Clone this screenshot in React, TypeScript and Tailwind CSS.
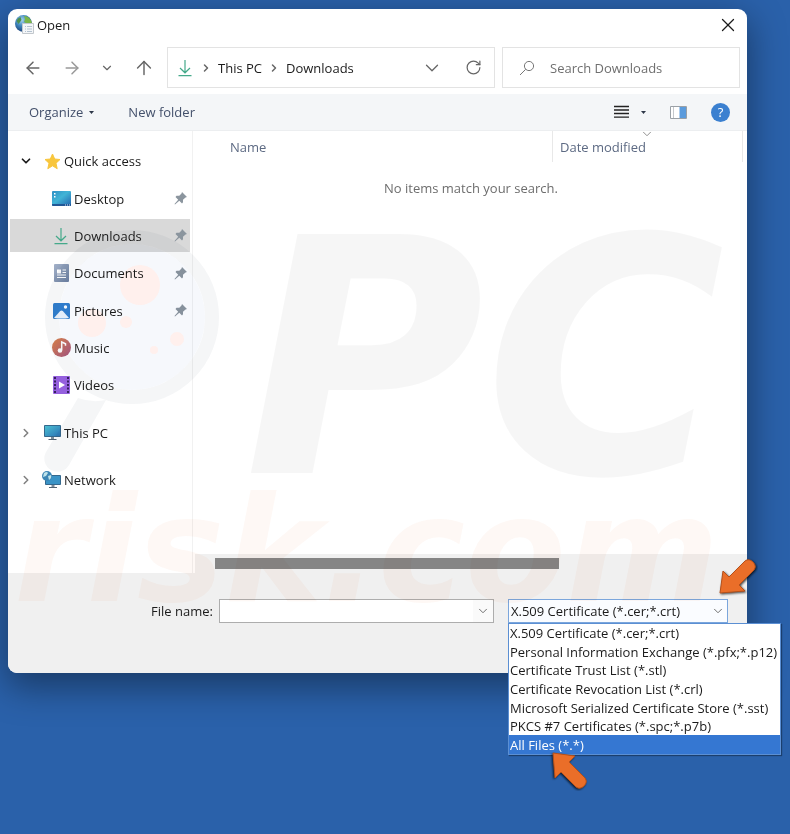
import type { ReactNode } from "react";
import {
  ArrowLeft,
  ArrowRight,
  ArrowUp,
  ChevronDown,
  ChevronRight,
  RotateCw,
  X,
} from "lucide-react";

const FILE_TYPES = [
  "X.509 Certificate (*.cer;*.crt)",
  "Personal Information Exchange (*.pfx;*.p12)",
  "Certificate Trust List (*.stl)",
  "Certificate Revocation List (*.crl)",
  "Microsoft Serialized Certificate Store (*.sst)",
  "PKCS #7 Certificates (*.spc;*.p7b)",
  "All Files (*.*)",
];

const FOLDERS = [
  { name: "Desktop", icon: <DesktopIcon />, pinned: true },
  { name: "Downloads", icon: <DownloadIcon />, pinned: true, active: true },
  { name: "Documents", icon: <DocumentIcon />, pinned: true },
  { name: "Pictures", icon: <PictureIcon />, pinned: true },
  { name: "Music", icon: <MusicIcon />, pinned: false },
  { name: "Videos", icon: <VideoIcon />, pinned: false },
];

export default function App() {
  return (
    <div className="relative min-h-screen overflow-hidden bg-[#2a61aa] pt-[9px] pr-[43px] pb-40 pl-2 font-['Open_Sans','Noto_Sans',sans-serif] text-[13px] leading-5 text-[#1b1b1b]">
      <main className="rounded-[9px] bg-white shadow-[0_12px_36px_2px_rgba(0,0,0,0.4)]">
        <TitleBar />
        <AddressRow />
        <Toolbar />
        <div className="flex">
          <Sidebar />
          <FileList />
        </div>
        <Footer />
      </main>
      <Watermark />
    </div>
  );
}

/* -------------------- Title bar -------------------- */

function TitleBar() {
  return (
    <header className="flex h-8 items-center justify-between pr-2 pl-[7px]">
      <div className="flex items-center gap-[3px]">
        <CertIcon />
        <h1>Open</h1>
      </div>
      <button type="button" aria-label="Close">
        <X size={22} strokeWidth={1.4} />
      </button>
    </header>
  );
}

/* -------------------- Address row -------------------- */

function AddressRow() {
  return (
    <div className="flex items-center px-[7px] py-1.5">
      <nav className="flex w-[152px] shrink-0 items-center justify-between pr-3 pl-2 text-[#666]">
        <button type="button" aria-label="Back">
          <ArrowLeft size={20} strokeWidth={1.8} />
        </button>
        <button type="button" aria-label="Forward" className="text-[#999]">
          <ArrowRight size={20} strokeWidth={1.8} />
        </button>
        <button type="button" aria-label="Recent locations">
          <ChevronDown size={14} strokeWidth={2} />
        </button>
        <button type="button" aria-label="Up">
          <ArrowUp size={22} strokeWidth={1.6} />
        </button>
      </nav>
      <div className="flex h-[41px] min-w-0 flex-1 items-center border border-[#e3e3e3] pr-3 pl-2">
        <DownloadIcon />
        <ChevronRight size={12} strokeWidth={3} className="mx-1.5 text-[#666]" />
        <a href="#this-pc">This PC</a>
        <ChevronRight size={12} strokeWidth={3} className="mx-1.5 text-[#666]" />
        <a href="#downloads">Downloads</a>
        <button
          type="button"
          aria-label="Previous locations"
          className="ml-auto text-[#666]"
        >
          <ChevronDown size={22} strokeWidth={1.4} />
        </button>
        <button
          type="button"
          aria-label="Refresh"
          className="ml-[22px] text-[#666]"
        >
          <RotateCw size={17} strokeWidth={1.7} />
        </button>
      </div>
      <label className="ml-[7px] flex h-[41px] w-[238px] shrink-0 items-center border border-[#e3e3e3] pl-4">
        <SearchIcon />
        <input
          type="search"
          aria-label="Search Downloads"
          placeholder="Search Downloads"
          className="ml-[15px] min-w-0 flex-1 outline-none placeholder:text-[#6f6f6f]"
        />
      </label>
    </div>
  );
}

/* -------------------- Toolbar -------------------- */

function Toolbar() {
  return (
    <div className="flex h-[37px] items-center border-b border-[#eceef0] bg-[#f4f6f8] pr-[17px] pl-[21px] text-[#43506b]">
      <button type="button" className="flex items-center gap-1.5">
        Organize
        <Caret />
      </button>
      <button type="button" className="ml-[34px]">
        New folder
      </button>
      <div className="ml-auto flex items-center">
        <button type="button" aria-label="Change view">
          <svg width="15" height="14" viewBox="0 0 15 14">
            <path
              d="M0 1.5h15M0 5h15M0 8.5h15M0 12.2h15"
              stroke="#222"
              strokeWidth="1.3"
            />
          </svg>
        </button>
        <button type="button" aria-label="More view options" className="ml-3">
          <Caret />
        </button>
        <button type="button" aria-label="Preview pane" className="ml-6">
          <svg width="17" height="13" viewBox="0 0 17 13">
            <path d="M.5.5h16v12H.5z" fill="#fff" stroke="#9aa0a6" />
            <path d="M3.5 1v11" stroke="#c4c8cc" />
            <path d="M9.5 1h6.5v11H9.5z" fill="#5b9bdc" />
          </svg>
        </button>
        <button
          type="button"
          aria-label="Help"
          className="ml-6 grid size-[19px] place-items-center rounded-full bg-[#3b80d0] leading-none text-white"
        >
          ?
        </button>
      </div>
    </div>
  );
}

function Caret() {
  return (
    <svg width="5" height="3" viewBox="0 0 5 3">
      <path d="M0 0h5L2.5 3z" fill="#2d3748" />
    </svg>
  );
}

/* -------------------- Sidebar -------------------- */

function Sidebar() {
  return (
    <aside className="w-[185px] shrink-0 border-r border-[#f1f1f1] pt-[11px] pb-[70px]">
      <div className="flex h-[38px] items-center pl-[11px]">
        <button type="button" aria-label="Collapse Quick access">
          <ChevronDown size={14} strokeWidth={3} />
        </button>
        <span className="ml-[11px] flex items-center gap-[3px]">
          <StarIcon />
          <a href="#quick-access">Quick access</a>
        </span>
      </div>
      <ul className="flex h-56 flex-col">
        {FOLDERS.map((f) => (
          <li key={f.name} className="flex flex-1 items-center px-0.5">
            <a
              href={`#${f.name.toLowerCase()}`}
              className={`flex h-[33px] flex-1 items-center pl-[41px] ${
                f.active ? "bg-[#d9d9d9]" : ""
              }`}
            >
              <span className="mr-[3px] grid w-5 place-items-center">
                {f.icon}
              </span>
              {f.name}
              {f.pinned && <PinIcon />}
            </a>
          </li>
        ))}
      </ul>
      <div className="pt-[5px]">
        <TreeRoot name="This PC" icon={<MonitorIcon />} />
        <TreeRoot name="Network" icon={<NetworkIcon />} />
      </div>
    </aside>
  );
}

function TreeRoot({ name, icon }: { name: string; icon: ReactNode }) {
  return (
    <div className="flex h-[47px] items-center pl-[11px]">
      <button type="button" aria-label={`Expand ${name}`}>
        <ChevronRight size={14} strokeWidth={2.6} className="text-[#808080]" />
      </button>
      <span className="ml-[11px] flex items-center gap-[3px]">
        {icon}
        <a href={`#${name.toLowerCase().replace(" ", "-")}`}>{name}</a>
      </span>
    </div>
  );
}

/* -------------------- File list -------------------- */

function FileList() {
  return (
    <section className="flex min-w-0 flex-1 flex-col pl-0.5">
      <div className="flex h-[31px] text-[#5d6a83]">
        <button type="button" className="flex-1 pl-[35px] text-left">
          Name
        </button>
        <button
          type="button"
          className="relative mr-1 w-[191px] border-x border-[#e8e8e8] pl-[7px] text-left"
        >
          Date modified
          <ChevronDown
            size={14}
            strokeWidth={1.6}
            className="absolute -top-1 left-[87px] text-[#888]"
          />
        </button>
      </div>
      <p className="pt-4 text-center text-[#6d6d6d]">
        No items match your search.
      </p>
      <div className="mt-auto h-[19px] bg-[#f0f0f0] pt-1 pr-[188px] pl-5">
        <div className="h-[11px] bg-[#858585]" />
      </div>
    </section>
  );
}

/* -------------------- Footer -------------------- */

function Footer() {
  return (
    <footer className="flex rounded-b-[9px] bg-[#f0f0f0] pt-[26px] pr-[19px] pb-[50px]">
      <div className="flex flex-1 items-center">
        <label htmlFor="file-name" className="w-[205px] text-right">
          File name:
        </label>
        <div className="ml-1.5 flex h-6 min-w-0 flex-1 items-center border border-[#adadad] bg-white">
          <input
            id="file-name"
            type="text"
            className="min-w-0 flex-1 px-1 outline-none"
          />
          <button
            type="button"
            aria-label="File name history"
            className="grid h-full w-5 place-items-center bg-[#fafafa] text-[#666]"
          >
            <ChevronDown size={14} strokeWidth={1.6} />
          </button>
        </div>
      </div>
      <div className="relative ml-3.5 w-[220px] shrink-0">
        <select
          aria-label="File type"
          className="block h-6 w-full appearance-none border border-[#7ba6dc] bg-[#fafcff] pr-5 pl-0.5 outline-none"
        >
          {FILE_TYPES.map((t) => (
            <option key={t}>{t}</option>
          ))}
        </select>
        <ChevronDown
          size={14}
          strokeWidth={1.6}
          className="pointer-events-none absolute top-[5px] right-[3px] text-[#666]"
        />
        <ul
          role="listbox"
          aria-label="File type options"
          className="absolute top-6 left-0 z-10 flex h-[132px] w-[273px] flex-col border border-[#5b8fd3] bg-white whitespace-nowrap shadow-[1px_1px_1px_rgba(0,0,0,0.35)]"
        >
          {FILE_TYPES.map((t) => {
            const selected = t === "All Files (*.*)";
            return (
              <li
                key={t}
                role="option"
                aria-selected={selected}
                className={`flex min-h-0 flex-1 items-center pl-px ${
                  selected ? "bg-[#3577d2] text-white" : ""
                }`}
              >
                {t}
              </li>
            );
          })}
        </ul>
        <PointerArrow className="absolute -top-[43px] -right-[30px] z-20" />
        <PointerArrow className="absolute top-[150px] left-10 z-20 rotate-90" />
      </div>
    </footer>
  );
}

/* -------------------- Watermark -------------------- */

function Watermark() {
  return (
    <svg
      className="pointer-events-none absolute top-0 left-0 mix-blend-multiply"
      width="790"
      height="640"
      viewBox="0 0 790 640"
      aria-hidden
    >
      <g fontFamily="DejaVu Sans" fontWeight="bold" fontStyle="italic">
        <text x="244" y="473" fontSize="328" fill="#000" fillOpacity="0.035">
          PC
        </text>
        <text x="14" y="601" fontSize="147" fill="#f06020" fillOpacity="0.045">
          risk.com
        </text>
      </g>
      <circle
        cx="132"
        cy="317"
        r="80"
        fill="none"
        stroke="#203050"
        strokeOpacity="0.045"
        strokeWidth="14"
      />
      <path
        d="M78 398 46 452a13 13 0 0 0 23 13l37-65q-14 3-28-2z"
        fill="#203050"
        fillOpacity="0.045"
      />
      <circle cx="132" cy="317" r="73" fill="#3060b0" fillOpacity="0.045" />
      <g fill="#fff0ed">
        <circle cx="140" cy="285" r="20" />
        <circle cx="92" cy="323" r="14" />
        <circle cx="126" cy="322" r="6" />
        <circle cx="177" cy="339" r="7" />
        <circle cx="154" cy="350" r="4" />
      </g>
    </svg>
  );
}

/* -------------------- Icons -------------------- */

function PointerArrow({ className }: { className: string }) {
  return (
    <svg width="42" height="42" viewBox="0 0 42 42" className={className}>
      <path
        d="M4 37 7 15l6 6L29 5q4-3 8 1t1 8L23 29l6 6z"
        fill="#ea6e29"
        stroke="#b5501a"
        strokeLinejoin="round"
        className="drop-shadow-[1px_1px_1px_rgba(0,0,0,0.7)]"
      />
    </svg>
  );
}

function CertIcon() {
  return (
    <svg width="19" height="20" viewBox="0 0 19 20">
      <defs>
        <radialGradient id="globe" cx=".4" cy=".3" r=".7">
          <stop offset="0" stopColor="#a5d4ee" />
          <stop offset=".5" stopColor="#3f86bd" />
          <stop offset="1" stopColor="#1d437c" />
        </radialGradient>
      </defs>
      <circle cx="8.500" cy="8.500" r="8.500" fill="url(#globe)" />
      <path d="M9 1q6 0 8 7l-4 1-4-2 1-3z" fill="#7ab648" />
      <path d="M1.500 6q1-3 4-4l1 3-3 4z" fill="#4e8f4c" />
      <path d="M7.500 8.500h11v10h-11z" fill="#f4f6f8" stroke="#c3c8cd" />
      <path d="M10 11.500h1m1 0h5m-7 2.500h1m1 0h5m-7 2.500h1m1 0h5" stroke="#b4c2d0" />
    </svg>
  );
}

function SearchIcon() {
  return (
    <svg width="16" height="16" viewBox="0 0 16 16" fill="none" stroke="#777">
      <circle cx="10" cy="6" r="4.600" />
      <path d="M6.700 9.300 1 15" />
    </svg>
  );
}

function DownloadIcon() {
  return (
    <svg width="18" height="18" viewBox="0 0 18 18" fill="none" stroke="#45a98a" strokeWidth="1.2">
      <path d="M9 1v12.500M4 9l5 4.800L14 9M2.500 16.600h13" />
    </svg>
  );
}

function StarIcon() {
  return (
    <svg width="17" height="17" viewBox="0 0 17 17">
      <path
        d="m8.500 1 2.200 5 5.300.5-4 3.700 1.200 5.500-4.700-2.900-4.700 2.900L5 10.200 1 6.500 6.300 6z"
        fill="#f8c63d"
        stroke="#f8c63d"
        strokeLinejoin="round"
      />
    </svg>
  );
}

function DesktopIcon() {
  return (
    <svg width="19" height="15" viewBox="0 0 19 15">
      <defs>
        <linearGradient id="desk" x1="0" y1="0" x2="1" y2="1">
          <stop offset="0" stopColor="#2f8fc4" />
          <stop offset=".45" stopColor="#41b4d6" />
          <stop offset="1" stopColor="#2363ad" />
        </linearGradient>
      </defs>
      <rect width="19" height="15" rx="1" fill="url(#desk)" />
      <path d="M2 2h1.500v1.500H2zm0 3h1.500v1.500H2z" fill="#fff" />
      <path d="M0 13h19v1a1 1 0 0 1-1 1H1a1 1 0 0 1-1-1z" fill="#215796" />
      <path d="M13 14h1m1 0h1m1 0h1" stroke="#d8e8f8" />
    </svg>
  );
}

function DocumentIcon() {
  return (
    <svg width="15" height="18" viewBox="0 0 15 18">
      <defs>
        <linearGradient id="doc" x1="0" y1="0" x2="1" y2="1">
          <stop offset="0" stopColor="#a3b1c8" />
          <stop offset="1" stopColor="#6c80a2" />
        </linearGradient>
      </defs>
      <rect width="15" height="18" rx="1" fill="url(#doc)" />
      <path d="M3 5.500h4v4H3z" fill="#fff" />
      <path d="M8.500 6H12M8.500 8.500H12M3 11h9M3 13.500h9" stroke="#fff" />
    </svg>
  );
}

function PictureIcon() {
  return (
    <svg width="17" height="16" viewBox="0 0 17 16">
      <rect width="17" height="16" rx="1.500" fill="#3180cf" />
      <path d="M1 15 7.200 8q1.300-1 2.600 0L16 15q-7.500 1-15 0z" fill="#eef5fd" />
      <circle cx="12.500" cy="4" r="1.700" fill="#fff" />
    </svg>
  );
}

function MusicIcon() {
  return (
    <svg width="19" height="19" viewBox="0 0 19 19">
      <defs>
        <linearGradient id="music" x1="0" y1="0" x2="1" y2="1">
          <stop offset="0" stopColor="#df8449" />
          <stop offset="1" stopColor="#a55582" />
        </linearGradient>
      </defs>
      <circle cx="9.500" cy="9.500" r="9.500" fill="url(#music)" />
      <path d="M9.700 12V4l3.800 1.800v2" fill="none" stroke="#fff" strokeWidth="1.500" />
      <circle cx="8" cy="12.500" r="2.300" fill="#fff" />
    </svg>
  );
}

function VideoIcon() {
  return (
    <svg width="17" height="18" viewBox="0 0 17 18">
      <rect width="17" height="18" rx="1" fill="#9560de" />
      <path d="M2 1v16M15 1v16" stroke="#35205e" strokeWidth="2" strokeDasharray="2 1.500" />
      <path d="m6 5.500 6 3.500-6 3.500z" fill="#fff" />
    </svg>
  );
}

function MonitorIcon() {
  return (
    <svg width="17" height="16" viewBox="0 0 17 16">
      <defs>
        <linearGradient id="screen" x1="0" y1="0" x2="1" y2="1">
          <stop offset="0" stopColor="#4dc3d3" />
          <stop offset="1" stopColor="#2a70b4" />
        </linearGradient>
      </defs>
      <path d="M.5.5h16v11H.5z" fill="url(#screen)" stroke="#35688d" />
      <path d="M7 12h3v2H7z" fill="#7c8b98" />
      <path d="M4.500 14.500h8" stroke="#526373" />
    </svg>
  );
}

function NetworkIcon() {
  return (
    <svg width="19" height="18" viewBox="0 0 19 18" className="-ml-0.5">
      <path d="M3.500 4.500h15v9h-15z" fill="#3a93c6" stroke="#35688d" />
      <path d="M9.500 14h3v2h-3z" fill="#7c8b98" />
      <path d="M7 16.500h8" stroke="#526373" />
      <circle cx="5" cy="5" r="5" fill="#3d86b5" />
      <path d="M2 2q3-2 4 0L4 5 1 6zm4 3 3-1q1 3-2 5z" fill="#bfe3ea" />
    </svg>
  );
}

function PinIcon() {
  return (
    <svg width="13" height="13" viewBox="0 0 13 13" className="mr-[3px] ml-auto">
      <path
        d="M8 0 13 5l-1.500.6-2.500 2.200v2.500L8 11.500 5.300 8.700 1 12.500l-.5-.5 3.700-4.300L1.500 5l1-1.200h2.800L7.500 1.500z"
        fill="#8b959e"
      />
    </svg>
  );
}
